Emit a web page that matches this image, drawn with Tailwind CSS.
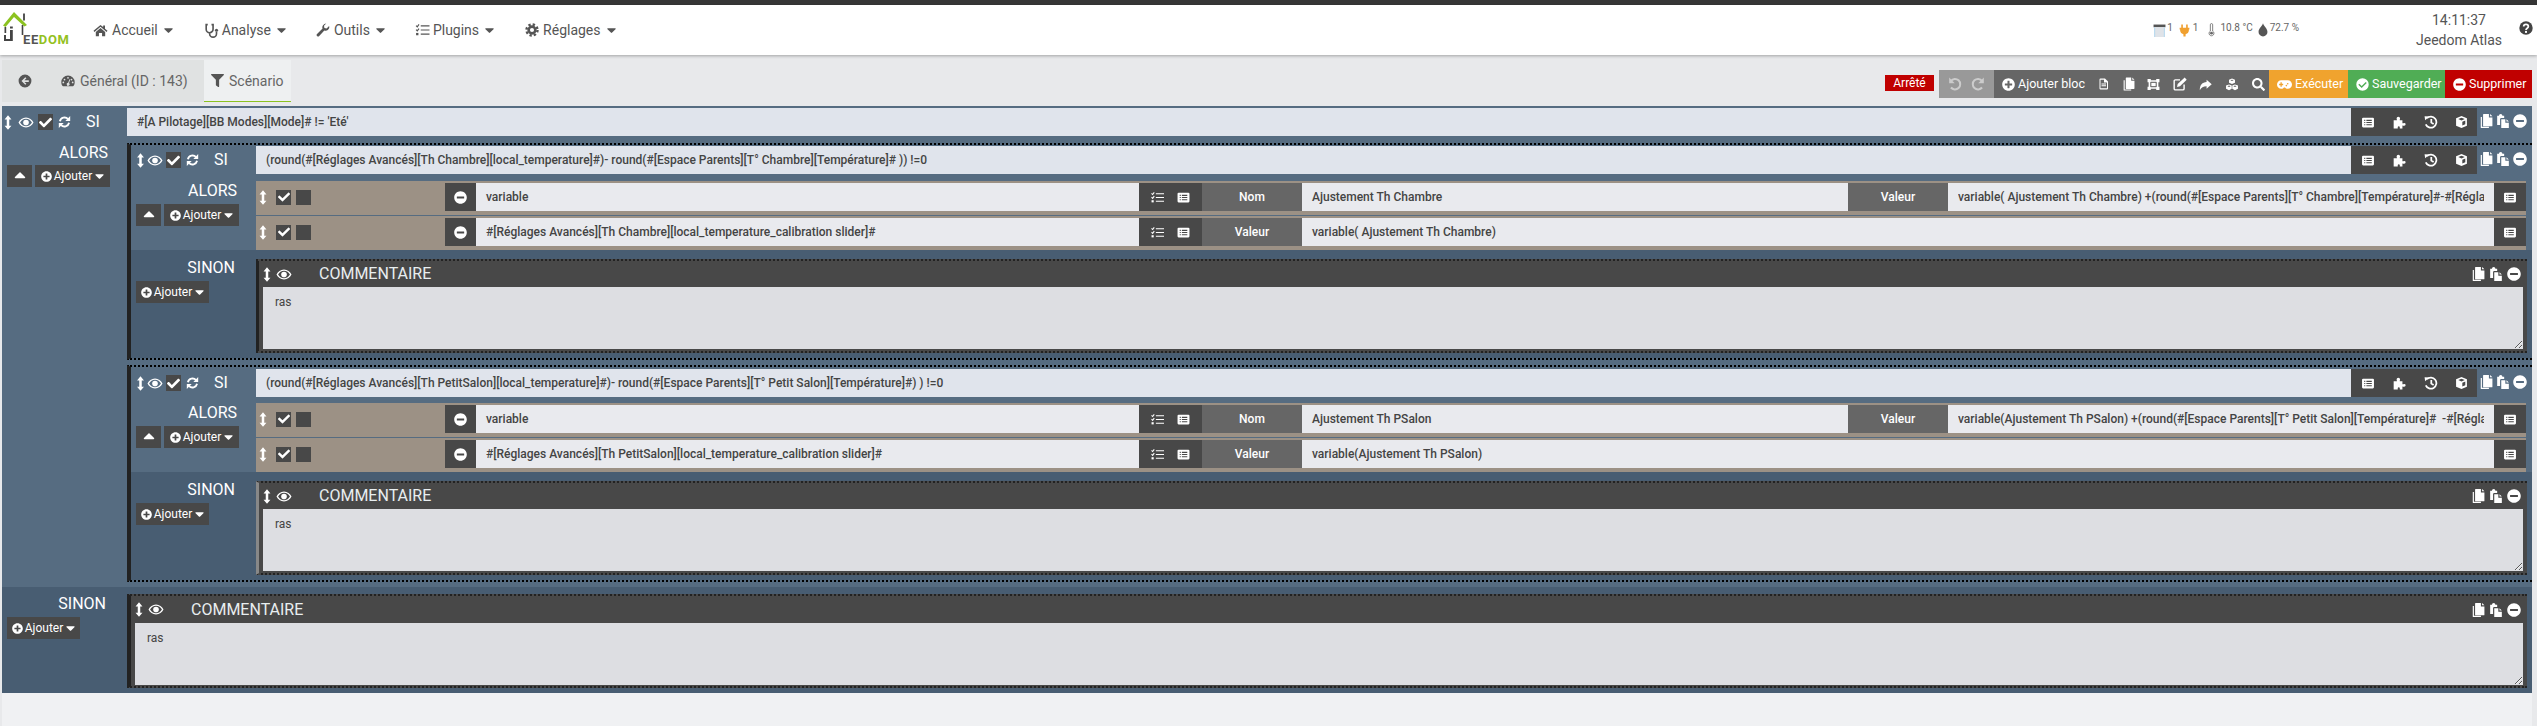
<!DOCTYPE html>
<html lang="fr">
<head>
<meta charset="UTF-8" />
<title>Jeedom - Scénario</title>
<script src="https://cdn.jsdelivr.net/npm/@tailwindcss/browser@4"></script>
</head>
<body class="h-[726px] overflow-hidden bg-[#e8e9eb] font-[Roboto,sans-serif] text-xs text-[#555]">
<!-- icon sprite -->
<svg class="hidden">
<symbol id="i-home" viewBox="0 0 24 24"><path fill="currentColor" d="M12 3 .8 12.500l1.500 1.700L12 6l9.700 8.200 1.500-1.700-4-3.400V4h-3v2.500zM4.500 14.500 12 8l7.500 6.500V21h-5v-5h-5v5h-5z"/></symbol>
<symbol id="i-steth" viewBox="0 0 24 24"><path fill="none" stroke="currentColor" stroke-width="2.600" d="M6 2.500H3.500V10a5.500 5.500 0 0 0 11 0V2.500H12M9 15.500v1.500a5.500 5.500 0 0 0 11 0v-3"/><circle cx="20" cy="11.500" r="2.500" fill="currentColor"/></symbol>
<symbol id="i-wrench" viewBox="0 0 24 24"><path fill="currentColor" d="M23 6.500a6.500 6.500 0 0 1-8.700 6.200L5.500 22.300a2.500 2.500 0 0 1-3.700-3.600l9.400-9.100A6.500 6.500 0 0 1 17.500 1l-3.800 3.800.7 3.800 3.800.7L22 5.500c.6.300 1 .6 1 1z"/></symbol>
<symbol id="i-tasks" viewBox="0 0 24 24"><path fill="none" stroke="currentColor" stroke-width="2" d="M1 4.500 3 6.500 6 2.500M1 11.500 3 13.500 6 9.500M9 5h15M9 12h15M9 19h15"/><rect x="1" y="17" width="4" height="4" fill="currentColor"/></symbol>
<symbol id="i-cog" viewBox="0 0 24 24"><circle cx="12" cy="12" r="9.500" fill="none" stroke="currentColor" stroke-width="4" stroke-dasharray="4 3.460"/><path fill="currentColor" fill-rule="evenodd" d="M12 4a8 8 0 1 0 0 16 8 8 0 0 0 0-16zm0 4.500a3.500 3.500 0 1 1 0 7 3.500 3.500 0 0 1 0-7z"/></symbol>
<symbol id="i-back" viewBox="0 0 24 24"><path fill="currentColor" fill-rule="evenodd" d="M12 1a11 11 0 1 0 0 22 11 11 0 0 0 0-22zM12.500 5.500l1.900 1.900L11 10.500h7.500v3H11l3.400 3.100-1.900 1.900L6 12z"/></symbol>
<symbol id="i-gauge" viewBox="0 0 24 24"><path fill="currentColor" fill-rule="evenodd" d="M12 2.500A11.500 11.500 0 0 0 .5 14c0 2.300.6 4.500 1.800 6.300.3.500.8.700 1.300.7h16.800c.5 0 1-.2 1.300-.7 1.200-1.800 1.800-4 1.800-6.300A11.500 11.500 0 0 0 12 2.500zm0 2.500a1.500 1.500 0 1 1 0 3 1.500 1.500 0 0 1 0-3zM6 8a1.500 1.500 0 1 1 0 3 1.500 1.500 0 0 1 0-3zm12 0a1.500 1.500 0 1 1 0 3 1.500 1.500 0 0 1 0-3zM4 13a1.500 1.500 0 1 1 0 3 1.500 1.500 0 0 1 0-3zm16 0a1.500 1.500 0 1 1 0 3 1.500 1.500 0 0 1 0-3zM14.500 9l1.400.5-2.100 6.100a2.500 2.500 0 1 1-1.500-.5z"/></symbol>
<symbol id="i-filter" viewBox="0 0 512 512"><path fill="currentColor" d="M487.976 0H24.028C2.71 0-8.047 25.866 7.058 40.971L192 225.941V432c0 7.831 3.821 15.17 10.237 19.662l80 55.98C298.02 518.69 320 507.493 320 487.98V225.941l184.947-184.97C520.021 25.896 509.338 0 487.976 0z"/></symbol>
<symbol id="i-arrows" viewBox="6 0 12 24"><path fill="currentColor" d="M12 .5 17.500 7H14v10h3.500L12 23.500 6.500 17H10V7H6.500z"/></symbol>
<symbol id="i-eye" viewBox="0 0 24 24"><path fill="currentColor" fill-rule="evenodd" d="M12 4C6.500 4 2.300 7.500 0 12c2.300 4.500 6.500 8 12 8s9.700-3.500 12-8c-2.300-4.500-6.500-8-12-8zm0 2c4.200 0 7.500 2.600 9.500 6-2 3.400-5.300 6-9.500 6s-7.500-2.600-9.500-6c2-3.400 5.300-6 9.500-6z"/><circle cx="12" cy="12" r="4.500" fill="currentColor"/></symbol>
<symbol id="i-check" viewBox="0 0 512 512"><path fill="currentColor" d="M173.898 439.404l-166.4-166.4c-9.997-9.997-9.997-26.206 0-36.204l36.203-36.204c9.997-9.998 26.207-9.998 36.204 0L192 312.69 432.095 72.596c9.997-9.997 26.207-9.997 36.204 0l36.203 36.204c9.997 9.997 9.997 26.206 0 36.204l-294.4 294.401c-9.998 9.997-26.207 9.997-36.204-.001z"/></symbol>
<symbol id="i-sync" viewBox="0 0 24 24"><path fill="none" stroke="currentColor" stroke-width="3.400" d="M3.500 10.500A8.800 8.800 0 0 1 18.500 6.500M20.500 13.500A8.800 8.800 0 0 1 5.500 17.500"/><path fill="currentColor" d="M22.500 1v9h-9zM1.500 23v-9h9z"/></symbol>
<symbol id="i-down" viewBox="0 0 320 512"><path fill="currentColor" d="M31.3 192h257.3c17.800 0 26.700 21.500 14.100 34.100L174.100 354.800c-7.800 7.800-20.500 7.800-28.300 0L17.200 226.100C4.600 213.500 13.500 192 31.300 192z"/></symbol>
<symbol id="i-up" viewBox="0 0 320 512"><path fill="currentColor" d="M288.600 320H31.300c-17.800 0-26.700-21.500-14.100-34.100l128.700-128.700c7.800-7.800 20.500-7.800 28.300 0l128.700 128.700c12.500 12.600 3.600 34.100-14.300 34.100z"/></symbol>
<symbol id="i-plus" viewBox="0 0 512 512"><path fill="currentColor" d="M256 8C119 8 8 119 8 256s111 248 248 248 248-111 248-248S393 8 256 8zm144 276c0 6.600-5.400 12-12 12h-92v92c0 6.600-5.400 12-12 12h-56c-6.600 0-12-5.400-12-12v-92h-92c-6.600 0-12-5.400-12-12v-56c0-6.600 5.400-12 12-12h92v-92c0-6.600 5.400-12 12-12h56c6.600 0 12 5.400 12 12v92h92c6.600 0 12 5.400 12 12v56z"/></symbol>
<symbol id="i-minus" viewBox="0 0 512 512"><path fill="currentColor" d="M256 8C119 8 8 119 8 256s111 248 248 248 248-111 248-248S393 8 256 8zM124 296c-6.600 0-12-5.400-12-12v-56c0-6.600 5.400-12 12-12h264c6.600 0 12 5.400 12 12v56c0 6.600-5.400 12-12 12H124z"/></symbol>
<symbol id="i-search" viewBox="0 0 512 512"><path fill="currentColor" d="M505 442.700L405.300 343c-4.500-4.500-10.600-7-17-7H372c27.600-35.300 44-79.700 44-128C416 93.100 322.900 0 208 0S0 93.100 0 208s93.100 208 208 208c48.300 0 92.700-16.400 128-44v16.300c0 6.400 2.500 12.500 7 17l99.700 99.700c9.400 9.400 24.600 9.400 33.900 0l28.300-28.300c9.400-9.400 9.400-24.600.1-34zM208 336c-70.700 0-128-57.200-128-128 0-70.700 57.200-128 128-128 70.700 0 128 57.200 128 128 0 70.700-57.200 128-128 128z"/></symbol>
<symbol id="i-list" viewBox="0 0 24 24"><path fill="currentColor" fill-rule="evenodd" d="M3 3h18a2 2 0 0 1 2 2v14a2 2 0 0 1-2 2H3a2 2 0 0 1-2-2V5a2 2 0 0 1 2-2zM5 7v2h2V7zm4 0v2h10V7zm-4 4v2h2v-2zm4 0v2h10v-2zm-4 4v2h2v-2zm4 0v2h10v-2z"/></symbol>
<symbol id="i-puzzle" viewBox="0 0 24 24"><path fill="currentColor" d="M2 9h5.500c.5-.8-.5-1.500-.5-3a3 3 0 0 1 6 0c0 1.500-1 2.200-.5 3H17v5c.8.500 1.500-.5 3-.5a2.500 2.500 0 0 1 0 5c-1.500 0-2.200-1-3-.5V23h-4.500v-2.500a1.800 1.800 0 0 0-3.500 0V23H2z"/></symbol>
<symbol id="i-history" viewBox="0 0 24 24"><path fill="none" stroke="currentColor" stroke-width="3" d="M5 5.500A9.500 9.500 0 1 1 3 16M12.500 7v6l4 2.500"/><path fill="currentColor" d="M1 2l8 .5L2 9z"/></symbol>
<symbol id="i-cube" viewBox="0 0 24 24"><path fill="currentColor" fill-rule="evenodd" d="M12 1 22 5v14l-10 4-10-4V5zm0 3L6 6.300 12 9l6-2.700zM13.500 11.500v7l5.500-2.300v-7z"/></symbol>
<symbol id="i-copy" viewBox="0 0 24 24"><path fill="currentColor" d="M8 0h9v6h6v14a1 1 0 0 1-1 1H8a1 1 0 0 1-1-1V1a1 1 0 0 1 1-1zM19 0l4 4h-4zM5 5v17h12v2H4a1 1 0 0 1-1-1V5z"/></symbol>
<symbol id="i-paste" viewBox="0 0 24 24"><path fill="currentColor" d="M2 3h3a3 3 0 0 1 6 0h3v4H9a2 2 0 0 0-2 2v10H2zM9 9h7v6h6v9H9zM18 9l4 4h-4z"/></symbol>
<symbol id="i-file" viewBox="0 0 24 24"><path fill="currentColor" fill-rule="evenodd" d="M5 1h9l6 6v14a2 2 0 0 1-2 2H5a2 2 0 0 1-2-2V3a2 2 0 0 1 2-2zm0 2.500V20.500h13V9h-6V3.500zM7 11h9v2H7zm0 3.500h9v2H7z"/></symbol>
<symbol id="i-group" viewBox="0 0 24 24"><path fill="currentColor" fill-rule="evenodd" d="M1 2h6v2h10V2h6v6h-2v8h2v6h-6v-2H7v2H1v-6h2V8H1zM7 7 6 8v8l1 1h10l1-1V8l-1-1z"/><rect x="8" y="9" width="8" height="6" fill="currentColor"/></symbol>
<symbol id="i-edit" viewBox="0 0 24 24"><path fill="none" stroke="currentColor" stroke-width="2.400" d="M19 13v7a2 2 0 0 1-2 2H4a2 2 0 0 1-2-2V7a2 2 0 0 1 2-2h8"/><path fill="currentColor" d="M20 1l3.500 3.500L12 16l-5 1 1-5z"/></symbol>
<symbol id="i-share" viewBox="0 0 24 24"><path fill="currentColor" d="M14 3l9.500 8.500L14 20v-5C8 15 4 17 1.500 22.500 1.500 13 6 8 14 7.500z"/></symbol>
<symbol id="i-cubes" viewBox="0 0 24 24"><path fill="currentColor" fill-rule="evenodd" d="M12 1l5.500 2.200v5.600L12 11 6.500 8.800V3.200zM6.500 12l5 2v6l-5 2.500-5.500-2.500v-6zM17.500 12l5.500 2v6l-5.500 2.500-5-2.500v-6zM12 3 9 4.200l3 1.200 3-1.200zM6.500 14l-3 1.200 3 1.200 3-1.200zM17.500 14l-3 1.200 3 1.200 3-1.200z"/></symbol>
<symbol id="i-undo" viewBox="0 0 24 24"><path fill="none" stroke="currentColor" stroke-width="3.400" d="M5 6.500A9 9 0 1 1 5 18"/><path fill="currentColor" d="M2 1v9.500h9.500z"/></symbol>
<symbol id="i-redo" viewBox="0 0 24 24"><path fill="none" stroke="currentColor" stroke-width="3.400" d="M19 6.500A9 9 0 1 0 19 18"/><path fill="currentColor" d="M22 1v9.500h-9.500z"/></symbol>
<symbol id="i-gamepad" viewBox="0 0 28 20"><path fill="currentColor" fill-rule="evenodd" d="M8 2h12a8 8 0 0 1 0 16c-2.500 0-4-1-5-2.500h-2C12 17 10.500 18 8 18A8 8 0 0 1 8 2zM6.500 6v2.800H4v2.400h2.500V14h2.400v-2.800h2.600V8.800H8.900V6zM20 7a1.500 1.500 0 1 0 0 3 1.500 1.500 0 0 0 0-3zm-2.500 3.500a1.500 1.500 0 1 0 0 3 1.500 1.500 0 0 0 0-3z"/></symbol>
<symbol id="i-ok" viewBox="0 0 24 24"><path fill="currentColor" fill-rule="evenodd" d="M12 .5a11.500 11.500 0 1 0 0 23 11.500 11.500 0 0 0 0-23zM18 7.500l1.800 1.800-9.300 9.200-6.200-6.200 1.800-1.800 4.400 4.400z"/></symbol>
<symbol id="i-help" viewBox="0 0 24 24"><circle cx="12" cy="12" r="11.500" fill="currentColor"/><path fill="none" stroke="#fff" stroke-width="3" d="M8 9.500c0-5 8-5 8 0 0 3-4 3-4 6"/><rect x="10.300" y="17" width="3.400" height="3.400" fill="#fff"/></symbol>
<symbol id="i-therm" viewBox="0 0 12 24"><path fill="none" stroke="#666" stroke-width="1.400" d="M4 14V3a2 2 0 0 1 4 0v11a4.200 4.200 0 1 1-4 0z"/><circle cx="6" cy="17.500" r="2.400" fill="#666"/></symbol>
<symbol id="i-plug" viewBox="0 0 20 24"><path fill="#f0a030" d="M4 1h3v6h6V1h3v6h3v3h-1v3a7 7 0 0 1-6 6v4H8v-4a7 7 0 0 1-6-6v-3H1V7h3z"/></symbol>
<symbol id="i-drop" viewBox="0 0 18 24"><path fill="#555" d="M9 0c1 5 8 9 8 15.500a8 8 0 0 1-16 0C1 9 8 5 9 0z"/></symbol>
<symbol id="i-door" viewBox="0 0 24 24"><rect x="1" y="1" width="22" height="5" fill="#555"/><path fill="#dfe3e8" d="M3 6h18v18H3z"/><path fill="#b8d8ee" d="M2 6h2v18H2zM20 6h2v18h-2z"/></symbol>
</svg>

<div class="h-[5px] bg-[#363636]"></div>

<!-- navbar -->
<nav class="flex h-[50px] items-center bg-white pl-[3px] pr-1 text-sm shadow-[0_1px_3px_rgba(0,0,0,0.3)]">
	<div class="relative h-[36px] w-[72px] shrink-0">
		<svg viewBox="0 0 30 36" class="absolute top-0 left-0 h-[36px] w-[30px]">
			<path fill="#8cc220" d="M0 13.500 11 0 24 13l-2.500 1.500L11 5 2.500 15z"/>
			<rect x="20" y="1.500" width="2" height="7" fill="#555"/>
			<path fill="none" stroke="#444" stroke-width="1.600" d="M19.500 13v10"/>
			<path fill="#444" d="M7 14.500h2.800v2H7zM7 18h2.800v11H1v-6h2v4h4z"/>
			<path fill="#444" d="M1.500 15h1.700v6H1.500z"/>
		</svg>
		<span class="absolute top-[21px] left-[20px] text-[13px] leading-none font-bold tracking-[0.6px]"><span class="text-[#555]">EE</span><span class="text-[#94c11f]">DOM</span></span>
	</div>
	<a class="ml-[18px] flex items-center"><svg class="mr-1 h-[15px] w-[15px]"><use href="#i-home"/></svg>Accueil<svg class="ml-[6px] h-[16px] w-[9px]"><use href="#i-down"/></svg></a>
	<a class="ml-[31px] flex items-center"><svg class="mr-[3px] h-[15px] w-[15px]"><use href="#i-steth"/></svg>Analyse<svg class="ml-[6px] h-[16px] w-[9px]"><use href="#i-down"/></svg></a>
	<a class="ml-[30px] flex items-center"><svg class="mr-1 h-[14px] w-[14px]"><use href="#i-wrench"/></svg>Outils<svg class="ml-[6px] h-[16px] w-[9px]"><use href="#i-down"/></svg></a>
	<a class="ml-[30px] flex items-center"><svg class="mr-[3px] h-[14px] w-[15px]"><use href="#i-tasks"/></svg>Plugins<svg class="ml-[6px] h-[16px] w-[9px]"><use href="#i-down"/></svg></a>
	<a class="ml-[31px] flex items-center"><svg class="mr-1 h-[14px] w-[14px]"><use href="#i-cog"/></svg>Réglages<svg class="ml-[6px] h-[16px] w-[9px]"><use href="#i-down"/></svg></a>

	<div class="ml-auto flex items-center text-[10px] text-[#666]">
		<svg class="h-[13px] w-[13px]"><use href="#i-door"/></svg><span class="mb-[3px] ml-[1px]">1</span>
		<svg class="ml-[6px] h-[13px] w-[11px]"><use href="#i-plug"/></svg><span class="mb-[3px] ml-[3px]">1</span>
		<svg class="ml-[10px] h-[14px] w-[7px]"><use href="#i-therm"/></svg><span class="mb-[3px] ml-[5px]">10.8 °C</span>
		<svg class="ml-[5px] h-[14px] w-[10px]"><use href="#i-drop"/></svg><span class="mb-[3px] ml-[2px]">72.7 %</span>
	</div>
	<div class="ml-[117px] w-[86px] text-center text-sm leading-5 whitespace-nowrap text-[#555]"><div>14:11:37</div><div>Jeedom Atlas</div></div>
	<svg class="mb-[5px] ml-[17px] h-[14px] w-[14px] text-[#444]"><use href="#i-help"/></svg>
</nav>

<div class="mt-[5px] mr-[5px] ml-[2px] h-[666px] bg-[#f0f1f3]">
	<!-- tabs + toolbar -->
	<div class="flex h-[46px] bg-[#e8e9eb] pb-[4px]">
		<div class="flex bg-[#e0e2e2] text-sm text-[#666]">
			<a class="flex w-[41px] items-center pl-[16px]"><svg class="h-[14px] w-[14px] text-[#555]"><use href="#i-back"/></svg></a>
			<a class="flex w-[161px] items-center pl-[18px]"><svg class="mr-[5px] h-[14px] w-[14px] text-[#555]"><use href="#i-gauge"/></svg>Général (ID : 143)</a>
			<a class="flex w-[87px] items-center border-b border-[#8cc220] bg-[#eef0f1] pl-[7px]"><svg class="mr-[5px] h-[13px] w-[13px] text-[#555]"><use href="#i-filter"/></svg>Scénario</a>
		</div>
		<div class="ml-auto flex h-[38px] items-start pt-[10px] text-white">
			<span class="mt-[5px] mr-[5px] flex h-[16px] w-[49px] items-center justify-center bg-[#c00000]">Arrêté</span>
			<div class="flex h-[28px] w-[55px] items-center justify-around bg-[#999] px-1 text-[#ccc]">
				<svg class="h-[14px] w-[14px]"><use href="#i-undo"/></svg>
				<svg class="h-[14px] w-[14px]"><use href="#i-redo"/></svg>
			</div>
			<div class="flex h-[28px] w-[275px] items-center bg-[#666] pl-[8px] text-[12.5px]">
				<svg class="mr-[3px] h-[13px] w-[13px]"><use href="#i-plus"/></svg>Ajouter bloc
				<svg class="ml-[13px] h-[14px] w-[12px]"><use href="#i-file"/></svg>
				<svg class="ml-[12px] h-[14px] w-[13px]"><use href="#i-copy"/></svg>
				<svg class="ml-[12px] h-[13px] w-[13px]"><use href="#i-group"/></svg>
				<svg class="ml-[13px] h-[14px] w-[14px]"><use href="#i-edit"/></svg>
				<svg class="ml-[12px] h-[13px] w-[13px]"><use href="#i-share"/></svg>
				<svg class="ml-[13px] h-[13px] w-[14px]"><use href="#i-cubes"/></svg>
				<svg class="ml-[13px] h-[13px] w-[13px]"><use href="#i-search"/></svg>
			</div>
			<div class="flex h-[28px] w-[79px] items-center bg-[#f0a32e] pl-[8px] text-[12.5px]"><svg class="mr-[3px] h-[11px] w-[15px]"><use href="#i-gamepad"/></svg>Exécuter</div>
			<div class="flex h-[28px] w-[97px] items-center bg-[#50ad55] pl-[8px] text-[12.5px]"><svg class="mr-[3px] h-[13px] w-[13px]"><use href="#i-ok"/></svg>Sauvegarder</div>
			<div class="flex h-[28px] w-[87px] items-center bg-[#c00000] pl-[8px] text-[12.5px]"><svg class="mr-[3px] h-[13px] w-[13px]"><use href="#i-minus"/></svg>Supprimer</div>
		</div>
	</div>

	<!-- SI principal -->
	<div class="bg-[#566c81] text-[#444]">
		<div class="flex h-[37px] pt-[2px]">
			<div class="flex h-[28px] w-[125px] shrink-0 items-center pl-[2px] text-white">
				<svg class="h-[15px] w-[8px]"><use href="#i-arrows"/></svg>
				<svg class="ml-[6px] h-[15px] w-[16px]"><use href="#i-eye"/></svg>
				<span class="ml-[4px] flex h-[16px] w-[15px] items-center justify-center bg-[#484848]"><svg class="h-[13px] w-[13px]"><use href="#i-check"/></svg></span>
				<svg class="ml-[5px] h-[14px] w-[13px]"><use href="#i-sync"/></svg>
				<span class="ml-[15px] text-base">SI</span>
			</div>
			<input class="h-[28px] min-w-0 flex-1 bg-[#e0e4ec] px-[10px] font-medium" value="#[A Pilotage][BB Modes][Mode]# != 'Eté'" />
			<div class="flex h-[28px] w-[126px] shrink-0 items-center justify-around bg-[#484848] px-[1px] text-white">
				<svg class="h-[13px] w-[14px]"><use href="#i-list"/></svg><svg class="h-[14px] w-[15px]"><use href="#i-puzzle"/></svg><svg class="h-[14px] w-[14px]"><use href="#i-history"/></svg><svg class="h-[14px] w-[13px]"><use href="#i-cube"/></svg>
			</div>
			<div class="flex h-[26px] w-[55px] shrink-0 items-center gap-[3px] pl-[2px] text-white">
				<svg class="h-[14px] w-[14px]"><use href="#i-copy"/></svg><svg class="h-[14px] w-[14px]"><use href="#i-paste"/></svg><svg class="h-[14px] w-[14px]"><use href="#i-minus"/></svg>
			</div>
		</div>

		<div class="flex">
			<!-- ALORS principal -->
			<div class="w-[125px] shrink-0 pt-[1px] pl-[5px] text-white">
				<div class="pr-[19px] text-right text-base leading-[18px]">ALORS</div>
				<div class="mt-[3px] flex"><span class="flex h-[22px] w-[25px] items-center justify-center bg-[#484848]"><svg class="h-[18px] w-[12px]"><use href="#i-up"/></svg></span><span class="ml-[3px] flex h-[22px] w-[75px] items-center justify-center bg-[#484848]"><svg class="mr-[2px] h-[11px] w-[11px]"><use href="#i-plus"/></svg>Ajouter<svg class="ml-[3px] h-[14px] w-[9px]"><use href="#i-down"/></svg></span></div>
			</div>

			<div class="min-w-0 flex-1">
				<!-- bloc Th Chambre -->
				<div class="border-t-2 border-b-2 border-l-4 border-t-black border-b-black border-l-[#222] [border-top-style:dotted] [border-bottom-style:dotted]">
					<div class="flex pt-[1px]">
						<div class="flex h-[28px] w-[125px] shrink-0 items-center pl-[5px] text-white">
							<svg class="h-[15px] w-[9px]"><use href="#i-arrows"/></svg>
							<svg class="ml-[2px] h-[15px] w-[16px]"><use href="#i-eye"/></svg>
							<span class="ml-[3px] flex h-[16px] w-[15px] items-center justify-center bg-[#484848]"><svg class="h-[13px] w-[13px]"><use href="#i-check"/></svg></span>
							<svg class="ml-[5px] h-[14px] w-[13px]"><use href="#i-sync"/></svg>
							<span class="ml-[15px] text-base">SI</span>
						</div>
						<input class="h-[28px] min-w-0 flex-1 bg-[#e0e4ec] px-[10px] font-medium" value="(round(#[Réglages Avancés][Th Chambre][local_temperature]#)- round(#[Espace Parents][T° Chambre][Température]# )) !=0" />
						<div class="flex h-[28px] w-[126px] shrink-0 items-center justify-around bg-[#484848] px-[1px] text-white">
							<svg class="h-[13px] w-[14px]"><use href="#i-list"/></svg><svg class="h-[14px] w-[15px]"><use href="#i-puzzle"/></svg><svg class="h-[14px] w-[14px]"><use href="#i-history"/></svg><svg class="h-[14px] w-[13px]"><use href="#i-cube"/></svg>
						</div>
						<div class="flex h-[26px] w-[55px] shrink-0 items-center gap-[3px] pl-[2px] text-white">
							<svg class="h-[14px] w-[14px]"><use href="#i-copy"/></svg><svg class="h-[14px] w-[14px]"><use href="#i-paste"/></svg><svg class="h-[14px] w-[14px]"><use href="#i-minus"/></svg>
						</div>
					</div>
					<div class="flex pt-[7px]">
						<div class="w-[125px] shrink-0 pt-[1px] pl-[5px] text-white">
							<div class="pr-[19px] text-right text-base leading-[18px]">ALORS</div>
							<div class="mt-[4px] flex"><span class="flex h-[22px] w-[25px] items-center justify-center bg-[#484848]"><svg class="h-[18px] w-[12px]"><use href="#i-up"/></svg></span><span class="ml-[3px] flex h-[22px] w-[75px] items-center justify-center bg-[#484848]"><svg class="mr-[2px] h-[11px] w-[11px]"><use href="#i-plus"/></svg>Ajouter<svg class="ml-[3px] h-[14px] w-[9px]"><use href="#i-down"/></svg></span></div>
						</div>
						<div class="mr-[6px] min-w-0 flex-1">
							<div class="flex h-[34px] bg-[#9c9185] pt-[2px] pb-[4px]">
								<div class="flex w-[189px] shrink-0 items-center pl-[3px] text-white"><svg class="h-[15px] w-[8px]"><use href="#i-arrows"/></svg><span class="ml-[9px] flex h-[15px] w-[15px] items-center justify-center bg-[#484848]"><svg class="h-[12px] w-[12px]"><use href="#i-check"/></svg></span><span class="ml-[5px] h-[15px] w-[15px] bg-[#484848]"></span></div>
								<span class="flex w-[31px] shrink-0 items-center justify-center bg-[#484848] text-white"><svg class="h-[13px] w-[13px]"><use href="#i-minus"/></svg></span>
								<div class="flex w-[663px] shrink-0 items-center bg-[#e9eaee] pl-[10px] font-medium">variable</div>
								<div class="flex w-[63px] shrink-0 items-center justify-around bg-[#484848] px-[6px] text-white"><svg class="h-[13px] w-[13px]"><use href="#i-tasks"/></svg><svg class="h-[13px] w-[13px]"><use href="#i-list"/></svg></div>
								<div class="flex w-[100px] shrink-0 items-center justify-center bg-[#666] font-medium text-white">Nom</div>
								<div class="flex w-[546px] shrink-0 items-center bg-[#e9eaee] pl-[10px] font-medium">Ajustement Th Chambre</div>
								<div class="flex w-[100px] shrink-0 items-center justify-center bg-[#666] font-medium text-white">Valeur</div>
								<input class="min-w-0 flex-1 bg-[#e9eaee] px-[10px] font-medium" value="variable( Ajustement Th Chambre) +(round(#[Espace Parents][T° Chambre][Température]#-#[Réglages Avancés][Th Chambre][local_temperature]#))" />
								<span class="flex w-[32px] shrink-0 items-center justify-center bg-[#484848] text-white"><svg class="h-[13px] w-[14px]"><use href="#i-list"/></svg></span>
							</div>
							<div class="mt-[1px] flex h-[34px] bg-[#9c9185] pt-[2px] pb-[4px]">
								<div class="flex w-[189px] shrink-0 items-center pl-[3px] text-white"><svg class="h-[15px] w-[8px]"><use href="#i-arrows"/></svg><span class="ml-[9px] flex h-[15px] w-[15px] items-center justify-center bg-[#484848]"><svg class="h-[12px] w-[12px]"><use href="#i-check"/></svg></span><span class="ml-[5px] h-[15px] w-[15px] bg-[#484848]"></span></div>
								<span class="flex w-[31px] shrink-0 items-center justify-center bg-[#484848] text-white"><svg class="h-[13px] w-[13px]"><use href="#i-minus"/></svg></span>
								<div class="flex w-[663px] shrink-0 items-center bg-[#e9eaee] pl-[10px] font-medium">#[Réglages Avancés][Th Chambre][local_temperature_calibration slider]#</div>
								<div class="flex w-[63px] shrink-0 items-center justify-around bg-[#484848] px-[6px] text-white"><svg class="h-[13px] w-[13px]"><use href="#i-tasks"/></svg><svg class="h-[13px] w-[13px]"><use href="#i-list"/></svg></div>
								<div class="flex w-[100px] shrink-0 items-center justify-center bg-[#666] font-medium text-white">Valeur</div>
								<div class="flex min-w-0 flex-1 items-center bg-[#e9eaee] pl-[10px] font-medium">variable( Ajustement Th Chambre)</div>
								<span class="flex w-[32px] shrink-0 items-center justify-center bg-[#484848] text-white"><svg class="h-[13px] w-[14px]"><use href="#i-list"/></svg></span>
							</div>
						</div>
					</div>
					<!-- SINON -->
					<div class="flex h-[108px] bg-[#485d72] pt-[9px]">
						<div class="w-[125px] shrink-0 pl-[5px] text-white">
							<div class="pr-[21px] text-right text-base leading-[18px]">SINON</div>
							<div class="mt-[4px] flex"><span class="flex h-[22px] w-[73px] items-center justify-center bg-[#484848]"><svg class="mr-[2px] h-[11px] w-[11px]"><use href="#i-plus"/></svg>Ajouter<svg class="ml-[3px] h-[14px] w-[9px]"><use href="#i-down"/></svg></span></div>
						</div>
						<div class="mr-[5px] h-[94px] min-w-0 flex-1 border-t-2 border-b-2 border-l-[3px] border-t-[#222] border-b-[#222] border-l-[#222] bg-[#484848] pr-[4px] pl-[4px] [border-top-style:dotted] [border-bottom-style:dotted]">
							<div class="flex h-[26px] items-center text-white">
								<svg class="h-[15px] w-[8px]"><use href="#i-arrows"/></svg>
								<svg class="ml-[5px] h-[15px] w-[16px]"><use href="#i-eye"/></svg>
								<span class="ml-[27px] text-base text-[#e8eef0]">COMMENTAIRE</span>
								<div class="ml-auto flex items-center gap-[4px] pr-[2px]"><svg class="h-[14px] w-[14px]"><use href="#i-copy"/></svg><svg class="h-[14px] w-[14px]"><use href="#i-paste"/></svg><svg class="h-[14px] w-[14px]"><use href="#i-minus"/></svg></div>
							</div>
							<textarea class="block h-[62px] w-full bg-[#dddee2] px-[12px] py-[8px] leading-[14px]">ras</textarea>
						</div>
					</div>
				</div>

				<!-- bloc Th PetitSalon -->
				<div class="mt-[5px] border-t-2 border-b-2 border-l-4 border-t-black border-b-black border-l-[#222] [border-top-style:dotted] [border-bottom-style:dotted]">
					<div class="flex pt-[2px]">
						<div class="flex h-[28px] w-[125px] shrink-0 items-center pl-[5px] text-white">
							<svg class="h-[15px] w-[9px]"><use href="#i-arrows"/></svg>
							<svg class="ml-[2px] h-[15px] w-[16px]"><use href="#i-eye"/></svg>
							<span class="ml-[3px] flex h-[16px] w-[15px] items-center justify-center bg-[#484848]"><svg class="h-[13px] w-[13px]"><use href="#i-check"/></svg></span>
							<svg class="ml-[5px] h-[14px] w-[13px]"><use href="#i-sync"/></svg>
							<span class="ml-[15px] text-base">SI</span>
						</div>
						<input class="h-[28px] min-w-0 flex-1 bg-[#e0e4ec] px-[10px] font-medium" value="(round(#[Réglages Avancés][Th PetitSalon][local_temperature]#)- round(#[Espace Parents][T° Petit Salon][Température]#) ) !=0" />
						<div class="flex h-[28px] w-[126px] shrink-0 items-center justify-around bg-[#484848] px-[1px] text-white">
							<svg class="h-[13px] w-[14px]"><use href="#i-list"/></svg><svg class="h-[14px] w-[15px]"><use href="#i-puzzle"/></svg><svg class="h-[14px] w-[14px]"><use href="#i-history"/></svg><svg class="h-[14px] w-[13px]"><use href="#i-cube"/></svg>
						</div>
						<div class="flex h-[26px] w-[55px] shrink-0 items-center gap-[3px] pl-[2px] text-white">
							<svg class="h-[14px] w-[14px]"><use href="#i-copy"/></svg><svg class="h-[14px] w-[14px]"><use href="#i-paste"/></svg><svg class="h-[14px] w-[14px]"><use href="#i-minus"/></svg>
						</div>
					</div>
					<div class="flex pt-[6px]">
						<div class="w-[125px] shrink-0 pt-[1px] pl-[5px] text-white">
							<div class="pr-[19px] text-right text-base leading-[18px]">ALORS</div>
							<div class="mt-[4px] flex"><span class="flex h-[22px] w-[25px] items-center justify-center bg-[#484848]"><svg class="h-[18px] w-[12px]"><use href="#i-up"/></svg></span><span class="ml-[3px] flex h-[22px] w-[75px] items-center justify-center bg-[#484848]"><svg class="mr-[2px] h-[11px] w-[11px]"><use href="#i-plus"/></svg>Ajouter<svg class="ml-[3px] h-[14px] w-[9px]"><use href="#i-down"/></svg></span></div>
						</div>
						<div class="mr-[6px] min-w-0 flex-1">
							<div class="flex h-[34px] bg-[#9c9185] pt-[2px] pb-[4px]">
								<div class="flex w-[189px] shrink-0 items-center pl-[3px] text-white"><svg class="h-[15px] w-[8px]"><use href="#i-arrows"/></svg><span class="ml-[9px] flex h-[15px] w-[15px] items-center justify-center bg-[#484848]"><svg class="h-[12px] w-[12px]"><use href="#i-check"/></svg></span><span class="ml-[5px] h-[15px] w-[15px] bg-[#484848]"></span></div>
								<span class="flex w-[31px] shrink-0 items-center justify-center bg-[#484848] text-white"><svg class="h-[13px] w-[13px]"><use href="#i-minus"/></svg></span>
								<div class="flex w-[663px] shrink-0 items-center bg-[#e9eaee] pl-[10px] font-medium">variable</div>
								<div class="flex w-[63px] shrink-0 items-center justify-around bg-[#484848] px-[6px] text-white"><svg class="h-[13px] w-[13px]"><use href="#i-tasks"/></svg><svg class="h-[13px] w-[13px]"><use href="#i-list"/></svg></div>
								<div class="flex w-[100px] shrink-0 items-center justify-center bg-[#666] font-medium text-white">Nom</div>
								<div class="flex w-[546px] shrink-0 items-center bg-[#e9eaee] pl-[10px] font-medium">Ajustement Th PSalon</div>
								<div class="flex w-[100px] shrink-0 items-center justify-center bg-[#666] font-medium text-white">Valeur</div>
								<input class="min-w-0 flex-1 bg-[#e9eaee] px-[10px] font-medium" value="variable(Ajustement Th PSalon) +(round(#[Espace Parents][T° Petit Salon][Température]#  -#[Réglages Avancés][Th PetitSalon][local_temperature]#))" />
								<span class="flex w-[32px] shrink-0 items-center justify-center bg-[#484848] text-white"><svg class="h-[13px] w-[14px]"><use href="#i-list"/></svg></span>
							</div>
							<div class="mt-[1px] flex h-[34px] bg-[#9c9185] pt-[2px] pb-[4px]">
								<div class="flex w-[189px] shrink-0 items-center pl-[3px] text-white"><svg class="h-[15px] w-[8px]"><use href="#i-arrows"/></svg><span class="ml-[9px] flex h-[15px] w-[15px] items-center justify-center bg-[#484848]"><svg class="h-[12px] w-[12px]"><use href="#i-check"/></svg></span><span class="ml-[5px] h-[15px] w-[15px] bg-[#484848]"></span></div>
								<span class="flex w-[31px] shrink-0 items-center justify-center bg-[#484848] text-white"><svg class="h-[13px] w-[13px]"><use href="#i-minus"/></svg></span>
								<div class="flex w-[663px] shrink-0 items-center bg-[#e9eaee] pl-[10px] font-medium">#[Réglages Avancés][Th PetitSalon][local_temperature_calibration slider]#</div>
								<div class="flex w-[63px] shrink-0 items-center justify-around bg-[#484848] px-[6px] text-white"><svg class="h-[13px] w-[13px]"><use href="#i-tasks"/></svg><svg class="h-[13px] w-[13px]"><use href="#i-list"/></svg></div>
								<div class="flex w-[100px] shrink-0 items-center justify-center bg-[#666] font-medium text-white">Valeur</div>
								<div class="flex min-w-0 flex-1 items-center bg-[#e9eaee] pl-[10px] font-medium">variable(Ajustement Th PSalon)</div>
								<span class="flex w-[32px] shrink-0 items-center justify-center bg-[#484848] text-white"><svg class="h-[13px] w-[14px]"><use href="#i-list"/></svg></span>
							</div>
						</div>
					</div>
					<div class="flex h-[108px] bg-[#485d72] pt-[9px]">
						<div class="w-[125px] shrink-0 pl-[5px] text-white">
							<div class="pr-[21px] text-right text-base leading-[18px]">SINON</div>
							<div class="mt-[4px] flex"><span class="flex h-[22px] w-[73px] items-center justify-center bg-[#484848]"><svg class="mr-[2px] h-[11px] w-[11px]"><use href="#i-plus"/></svg>Ajouter<svg class="ml-[3px] h-[14px] w-[9px]"><use href="#i-down"/></svg></span></div>
						</div>
						<div class="mr-[5px] h-[94px] min-w-0 flex-1 border-t-2 border-b-2 border-l-[3px] border-t-[#222] border-b-[#222] border-l-[#888] bg-[#484848] pr-[4px] pl-[4px] [border-top-style:dotted] [border-bottom-style:dotted]">
							<div class="flex h-[26px] items-center text-white">
								<svg class="h-[15px] w-[8px]"><use href="#i-arrows"/></svg>
								<svg class="ml-[5px] h-[15px] w-[16px]"><use href="#i-eye"/></svg>
								<span class="ml-[27px] text-base text-[#e8eef0]">COMMENTAIRE</span>
								<div class="ml-auto flex items-center gap-[4px] pr-[2px]"><svg class="h-[14px] w-[14px]"><use href="#i-copy"/></svg><svg class="h-[14px] w-[14px]"><use href="#i-paste"/></svg><svg class="h-[14px] w-[14px]"><use href="#i-minus"/></svg></div>
							</div>
							<textarea class="block h-[62px] w-full bg-[#dddee2] px-[12px] py-[8px] leading-[14px]">ras</textarea>
						</div>
					</div>
				</div>
				<div class="h-[5px]"></div>
			</div>
		</div>

		<!-- SINON principal -->
		<div class="flex h-[106px] bg-[#485d72] pt-[7px]">
			<div class="w-[125px] shrink-0 pt-[1px] pl-[5px] text-white">
				<div class="pr-[21px] text-right text-base leading-[18px]">SINON</div>
				<div class="mt-[4px] flex"><span class="flex h-[22px] w-[73px] items-center justify-center bg-[#484848]"><svg class="mr-[2px] h-[11px] w-[11px]"><use href="#i-plus"/></svg>Ajouter<svg class="ml-[3px] h-[14px] w-[9px]"><use href="#i-down"/></svg></span></div>
			</div>
			<div class="mr-[5px] h-[94px] min-w-0 flex-1 border-t-2 border-b-2 border-l-4 border-t-[#222] border-b-[#222] border-l-[#222] bg-[#484848] pr-[4px] pl-[4px] [border-top-style:dotted] [border-bottom-style:dotted]">
				<div class="flex h-[27px] items-center text-white">
					<svg class="h-[15px] w-[8px]"><use href="#i-arrows"/></svg>
					<svg class="ml-[5px] h-[15px] w-[16px]"><use href="#i-eye"/></svg>
					<span class="ml-[27px] text-base text-[#e8eef0]">COMMENTAIRE</span>
					<div class="ml-auto flex items-center gap-[4px] pr-[2px]"><svg class="h-[14px] w-[14px]"><use href="#i-copy"/></svg><svg class="h-[14px] w-[14px]"><use href="#i-paste"/></svg><svg class="h-[14px] w-[14px]"><use href="#i-minus"/></svg></div>
				</div>
				<textarea class="block h-[62px] w-full bg-[#dddee2] px-[12px] py-[8px] leading-[14px]">ras</textarea>
			</div>
		</div>
	</div>
</div>
</body>
</html>
